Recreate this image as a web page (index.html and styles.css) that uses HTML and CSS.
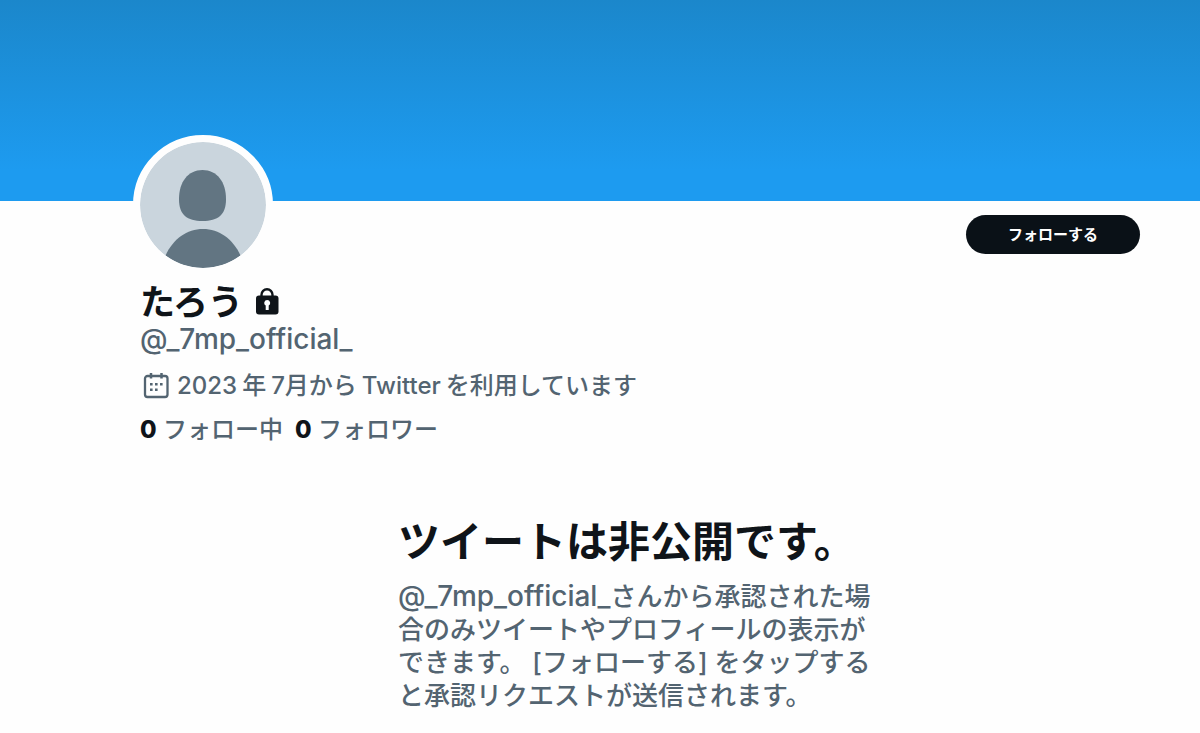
FILE: index.html
```html
<!DOCTYPE html>
<html lang="ja">
<head>
  <meta charset="UTF-8">
  <meta name="viewport" content="width=device-width, initial-scale=1.0">
  <title>たろう (@_7mp_official_)</title>
  <link rel="stylesheet" href="styles.css">
</head>
<body>

<div class="banner"></div>

<main class="profile">
  <div class="profile-top">
    <svg class="avatar" viewBox="0 0 126 126" role="img" aria-label="たろう">
      <circle cx="63" cy="63" r="63" fill="#cad5dd"/>
      <path d="M62.500 28C77 28 86 40 86 57C86 73 78 79 62.500 79C47 79 39 73 39 57C39 40 48 28 62.500 28Z" fill="#627582"/>
      <path d="M25.500 113.500C33 97 47 87 63 87C79 87 93 97 100.500 113.500A63 63 0 0 1 25.500 113.500Z" fill="#627582"/>
    </svg>
    <button type="button" class="follow-btn">フォローする</button>
  </div>

  <h1 class="name">
    たろう
    <svg class="lock" viewBox="0 0 24 28" role="img" aria-label="非公開">
      <path d="M6.500 10V6.700a5.500 5.500 0 0 1 11 0V10" fill="none" stroke="#0f1419" stroke-width="2.400"/>
      <rect x="1" y="7.500" width="22.500" height="19" rx="3" fill="#0f1419"/>
      <path d="M12.200 12a3 3 0 0 1 1.500 5.600v4.400h-3v-4.400a3 3 0 0 1 1.500-5.600z" fill="#fff"/>
    </svg>
  </h1>
  <p class="handle">@_7mp_official_</p>

  <p class="joined">
    <svg class="calendar" viewBox="0 0 26 26" aria-hidden="true">
      <rect x="2" y="3" width="22.500" height="21" rx="2.500" fill="none" stroke="#536471" stroke-width="2.300"/>
      <path d="M8 0v5.500M18.500 0v5.500" stroke="#536471" stroke-width="2.500"/>
      <path d="M12 10h2.600v2.600h-2.600zM17 10h2.600v2.600h-2.600zM7 10h2.600v2.600h-2.600zM7 15.500h2.600v2.600h-2.600zM12 15.500h2.600v2.600h-2.600z" fill="#536471"/>
    </svg>
    <span>2023<span class="latin">年</span>7月から<span class="latin">Twitter</span>を利用しています</span>
  </p>

  <div class="counts">
    <a href="#"><b>0</b> フォロー中</a>
    <a href="#"><b>0</b> フォロワー</a>
  </div>

  <section class="locked">
    <h2>ツイートは非公開です。</h2>
    <p><span class="mention">@_7mp_official_</span><span>さんから承認された場合のみツイートやプロフィールの表示ができます。 [フォローする] をタップすると承認リクエストが送信されます。</span></p>
  </section>
</main>

</body>
</html>
```

FILE: styles.css
```css
* { box-sizing: border-box; }
body { margin: 0; background: #fefefe; color: #0f1419; font-family: Inter, "Noto Sans CJK JP", sans-serif; }
h1, h2, p { margin: 0; }
.banner { height: 201px; background: linear-gradient(#1b87cb, #1d9bf0 85%); }
.profile { padding: 0 60px 16px 140px; }

.profile-top { display: flex; justify-content: space-between; align-items: flex-start; height: 82px; }
.avatar {
  width: 140px;
  height: 140px;
  margin: -66px 0 0 -7px;
  border: 7px solid #fefefe;
  border-radius: 50%;
  background: #fefefe;
}
.follow-btn {
  width: 174px;
  height: 39px;
  margin-top: 14px;
  padding: 0 0 2px;
  border: none;
  border-radius: 20px;
  background: #0a1117;
  color: #fff;
  font: 700 15px Inter, "Noto Sans CJK JP", sans-serif;
  cursor: pointer;
}
.follow-btn:hover { background: #272c30; }

.name { display: flex; align-items: center; gap: 12px; font-size: 35px; line-height: 38px; }
.lock { width: 24px; height: 28px; }
.handle { color: #536471; font-size: 28px; font-weight: 500; line-height: 36px; }
.joined { display: flex; align-items: center; gap: 8px; margin-top: 11px; padding-left: 3px; color: #536471; font-size: 24px; font-weight: 500; line-height: 36px; }
.joined .latin { margin: 0 5px; }
.calendar { width: 26px; height: 26px; }
.counts { display: flex; gap: 12px; margin-top: 8px; font-size: 24px; font-weight: 500; line-height: 36px; }
.counts a { color: #536471; text-decoration: none; }
.counts b { color: #0f1419; font-weight: 800; }

/* Protected account message */
.locked { width: 100%; max-width: 484px; margin: 66px auto 0; }
.locked h2 { font-size: 42px; line-height: 56px; }
.locked p { margin-top: 10px; color: #536471; font-size: 26px; font-weight: 500; line-height: 33px; }
.mention { font-size: 28px; }
```
